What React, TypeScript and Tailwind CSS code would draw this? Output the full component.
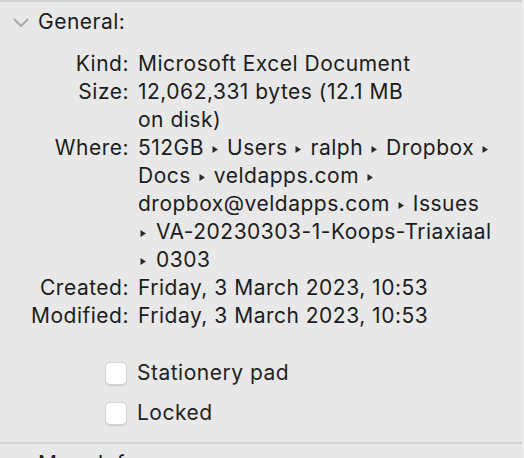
import React from 'react'

const font = { fontFamily: 'Inter, "Noto Sans", sans-serif' }

function Arrow({ lead }: { lead?: boolean }) {
  return (
    <svg
      width="7"
      height="9"
      viewBox="0 0 7 9"
      className={lead ? 'inline-block ml-[2px] mr-[9px] align-[1px]' : 'inline-block mx-[8px] align-[1px]'}
    >
      <path d="M0.5 1 L6 4.5 L0.5 8 Z" fill="#2a2a2a" />
    </svg>
  )
}

const rows: { label: string; lines: React.ReactNode[] }[] = [
  { label: 'Kind:', lines: ['Microsoft Excel Document'] },
  { label: 'Size:', lines: ['12,062,331 bytes (12.1 MB', 'on disk)'] },
  {
    label: 'Where:',
    lines: [
      <>512GB<Arrow />Users<Arrow />ralph<Arrow />Dropbox<Arrow /></>,
      <>Docs<Arrow />veldapps.com<Arrow /></>,
      <>dropbox@veldapps.com<Arrow />Issues</>,
      <><Arrow lead />VA-20230303-1-Koops-Triaxiaal</>,
      <><Arrow lead />0303</>,
    ],
  },
  { label: 'Created:', lines: ['Friday, 3 March 2023, 10:53'] },
  { label: 'Modified:', lines: ['Friday, 3 March 2023, 10:53'] },
]

function Check({ label }: { label: string }) {
  return (
    <label className="flex items-center h-[40px]">
      <span className="w-[22px] h-[23px] rounded-[5px] bg-white border border-[#d6d6d6] shadow-[0_0.5px_1px_rgba(0,0,0,0.12)] mr-[10px]" />
      <span className="text-[21px] tracking-[0.5px] text-[#222]">{label}</span>
    </label>
  )
}

export default function App() {
  return (
    <div className="w-[524px] h-[458px] bg-[#e8e8e8] overflow-hidden relative text-[#1c1c1c]" style={font}>
      <div className="h-[2px] bg-[#d2d2d2]" />
      {/* General header */}
      <div className="flex items-center h-[40px] pl-[13px]">
        <svg width="16" height="10" viewBox="0 0 16 10" className="mr-[9px] mt-[2px]">
          <path d="M1.5 1.5 L8 8 L14.5 1.5" fill="none" stroke="#a8a8a8" strokeWidth="2" strokeLinecap="round" strokeLinejoin="round" />
        </svg>
        <span className="text-[21px] tracking-[0.5px]">General:</span>
      </div>

      <div className="pt-[8px]">
        {rows.map(r => (
          <div key={r.label} className="flex text-[21px] leading-[28px] tracking-[0.5px]">
            <div className="w-[129px] text-right shrink-0">{r.label}</div>
            <div className="pl-[9px] whitespace-nowrap">
              {r.lines.map((l, i) => (
                <div key={i}>{l}</div>
              ))}
            </div>
          </div>
        ))}
      </div>

      <div className="pl-[105px] pt-[23px]">
        <Check label="Stationery pad" />
        <Check label="Locked" />
      </div>

      <div className="absolute left-0 right-0 top-[442px] h-[2px] bg-[#d2d2d2]" />
      <div className="absolute left-[38px] top-[450px] text-[21px] tracking-[0.5px] leading-[28px]">More Info:</div>
      <div className="absolute top-0 bottom-0 right-0 w-[2px] bg-[#ececec]" />
    </div>
  )
}
